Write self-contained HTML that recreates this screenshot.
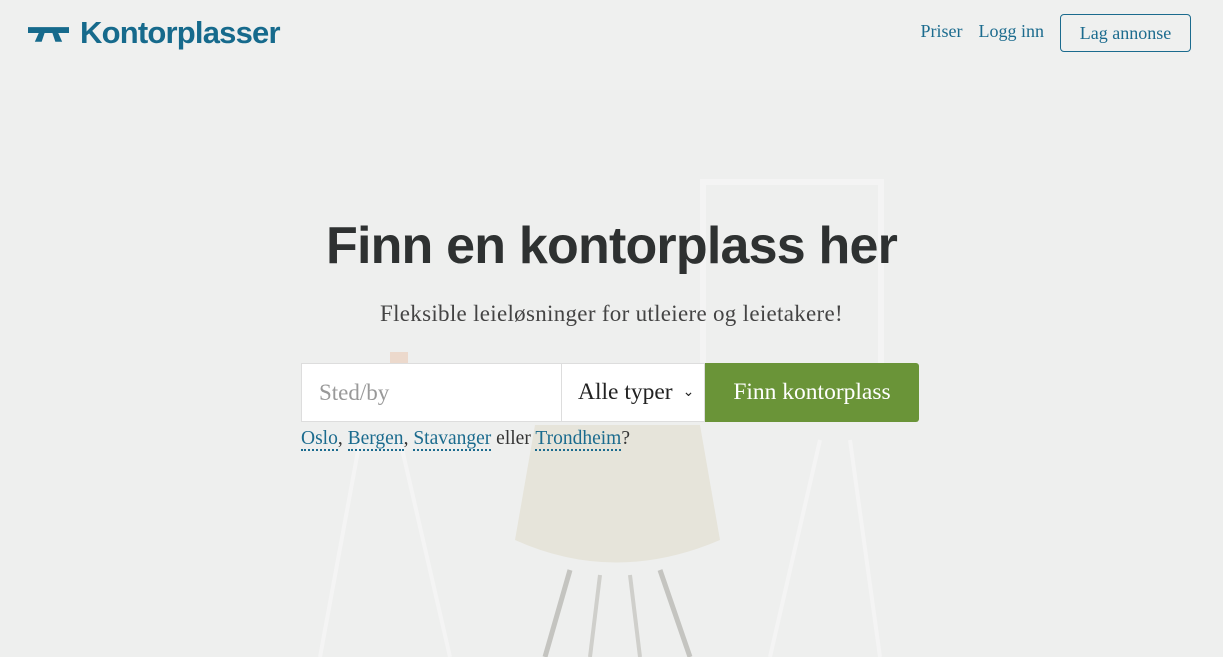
<!DOCTYPE html>
<html><head><meta charset="utf-8"><style>
*{margin:0;padding:0;box-sizing:border-box}
body{width:1223px;height:657px;overflow:hidden;background:#eeefee;font-family:"Liberation Serif",serif;position:relative}
.bg{position:absolute;inset:0}
.logo{position:absolute;left:28px;top:15px;display:flex;align-items:center;color:#166a8c;font-family:"Liberation Sans",sans-serif;font-weight:bold;font-size:31px;letter-spacing:-0.8px}
.logo svg{margin-right:11px}
.nav{position:absolute;top:14px;right:32px;display:flex;align-items:center;color:#1b6b8e;font-size:18px}
.nav a{margin-right:16px;margin-top:-4px}
.btn{border:1.5px solid #1b6b8e;border-radius:4px;width:131px;height:38px;display:flex;align-items:center;justify-content:center;font-size:18px}
h1{position:absolute;top:216px;left:0;width:1223px;text-align:center;font-family:"Liberation Sans",sans-serif;font-size:52px;font-weight:bold;color:#2e3131;letter-spacing:-0.8px}
.sub{position:absolute;top:301px;width:1223px;text-align:center;font-size:23px;color:#444;letter-spacing:0.3px}
.search{position:absolute;left:301px;top:363px;height:59px;display:flex}
.inp{width:261px;background:#fff;border:1px solid #ddd;padding-left:17px;display:flex;align-items:center;font-size:23px;color:#999}
.sel{width:143px;background:#fff;border:1px solid #ddd;border-left:none;display:flex;align-items:center;padding-left:16px;font-size:23.5px;color:#222}
.go{width:214px;background:#6a9438;color:#fff;display:flex;align-items:center;justify-content:center;font-size:23.5px;border-radius:0 3px 3px 0}
.cities{position:absolute;left:301px;top:428px;font-size:19.5px;color:#333}
.cities a{color:#1b6b8e;border-bottom:2px dotted #1b6b8e}
</style></head><body>
<svg class="bg" width="1223" height="657">
<rect x="0" y="0" width="1223" height="90" fill="#eff0ef"/>
<rect x="703" y="182" width="178" height="200" fill="none" stroke="#f4f4f4" stroke-width="6"/>
<line x1="360" y1="440" x2="320" y2="657" stroke="#f4f4f4" stroke-width="4"/>
<line x1="400" y1="440" x2="450" y2="657" stroke="#f4f4f4" stroke-width="4"/>
<line x1="820" y1="440" x2="770" y2="657" stroke="#f4f4f4" stroke-width="4"/>
<line x1="850" y1="440" x2="880" y2="657" stroke="#f4f4f4" stroke-width="4"/>
<path d="M535 425 L700 425 L720 540 Q615 585 515 540 Z" fill="#e6e4da"/>
<line x1="570" y1="570" x2="545" y2="657" stroke="#c4c4c0" stroke-width="5"/>
<line x1="600" y1="575" x2="590" y2="657" stroke="#cfcfcb" stroke-width="4"/>
<line x1="660" y1="570" x2="690" y2="657" stroke="#c4c4c0" stroke-width="5"/>
<line x1="630" y1="575" x2="640" y2="657" stroke="#cfcfcb" stroke-width="4"/>
<rect x="390" y="352" width="18" height="11" fill="#ecd9cc"/>
</svg>
<div class="logo"><svg width="41" height="20" viewBox="0 0 42 20"><path d="M0 4h42v6H31l4 9h-7l-3-9H17l-3 9H7l4-9H0z" fill="#166a8c"/></svg>Kontorplasser</div>
<div class="nav"><a>Priser</a><a>Logg inn</a><div class="btn">Lag annonse</div></div>
<h1>Finn en kontorplass her</h1>
<div class="sub">Fleksible leieløsninger for utleiere og leietakere!</div>
<div class="search"><div class="inp">Sted/by</div><div class="sel">Alle typer <span style="font-size:14px;margin-left:10px">⌄</span></div><div class="go">Finn kontorplass</div></div>
<div class="cities"><a>Oslo</a>, <a>Bergen</a>, <a>Stavanger</a> eller <a>Trondheim</a>?</div>
</body></html>
